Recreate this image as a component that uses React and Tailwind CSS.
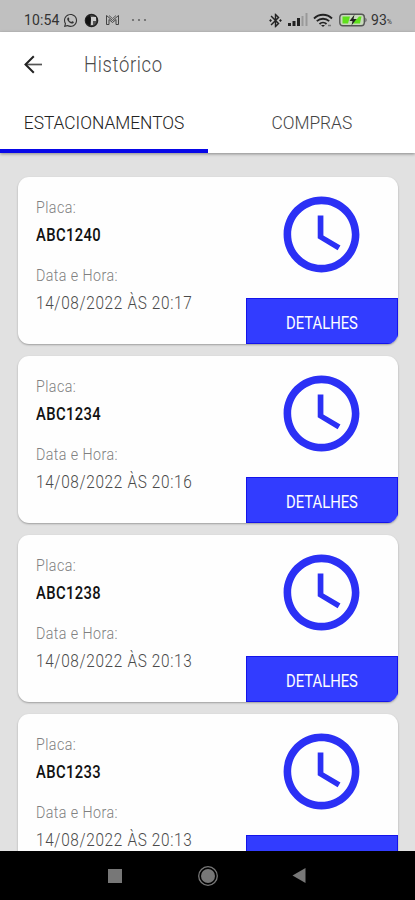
import { FaWhatsapp } from 'react-icons/fa';
import { MdAccessTime, MdBluetoothConnected } from 'react-icons/md';

const tickets = [
  { plate: 'ABC1240', date: '14/08/2022 ÀS 20:17' },
  { plate: 'ABC1234', date: '14/08/2022 ÀS 20:16' },
  { plate: 'ABC1238', date: '14/08/2022 ÀS 20:13' },
  { plate: 'ABC1233', date: '14/08/2022 ÀS 20:13' },
];

const StatusBar = () => (
  <div className="flex h-[32px] shrink-0 items-center bg-[#c0c0c0] pt-[8px] pr-[23px] pl-[24px] text-[#333]">
    <span className="w-[38px] shrink-0 text-[14px] leading-none tracking-[0.1px]">10:54</span>
    <FaWhatsapp className="ml-[1px] size-[15px] shrink-0" />
    <svg className="ml-[6px] size-[15px] shrink-0" viewBox="0 0 15 15">
      <circle cx="7.5" cy="7.5" r="6" fill="#555" stroke="#222" strokeWidth="1.6" />
      <path d="M2 5l4-3 1 4-1 7-4-3z" fill="#111" />
      <path d="M7 4h5v4H9v4H7z" fill="#ccc" />
    </svg>
    <svg className="ml-[6px] h-[12px] w-[15px] shrink-0" viewBox="0 0 15 12" fill="none" stroke="#444">
      <path d="M1.5 10.5v-9l6 5 6-5v9h-2.500v-5l-3.500 3-3.500-3v5z" strokeWidth="1" />
      <path d="M4 1.500l3.500 3 3.500-3" strokeWidth=".8" />
    </svg>
    <svg className="ml-[11px] h-[4px] w-[16px] shrink-0" viewBox="0 0 16 4" fill="#666">
      <circle cx="2" cy="2" r="1.1" />
      <circle cx="8" cy="2" r="1.1" />
      <circle cx="14" cy="2" r="1.1" />
    </svg>

    <div className="ml-auto flex items-center">
      <MdBluetoothConnected className="size-[17px] text-[#222]" />
      <svg className="ml-[4px] h-[14px] w-[20px]" viewBox="0 0 20 14">
        <path d="M0 10h3v3H0zM4.500 8h3v5h-3zM9 5h3v8H9z" fill="#222" />
        <path d="M13.500 3h2v10h-2zM17.500 0h2v13h-2z" fill="#999" />
      </svg>
      <svg className="ml-[5px] h-[15px] w-[20px]" viewBox="0 0 20 15" fill="none" stroke="#222" strokeWidth="1.8">
        <path d="M1 5.500c5-5 13-5 18 0M3.800 8.200c3.500-3.300 8.900-3.300 12.400 0M6.500 11c2-1.900 5-1.900 7 0" />
        <path d="M8 12l2 2 2-2z" fill="#222" stroke="none" />
        <path d="M15 12.500h3" stroke="#777" strokeWidth="1.500" />
      </svg>
      <svg className="ml-[6px] h-[14px] w-[29px]" viewBox="0 0 29 14">
        <rect x=".8" y="1.200" width="24.500" height="11.600" rx="3" fill="#c8d8bc" stroke="#555" strokeWidth="1.400" />
        <path d="M3.500 3.500h7.500l-2 7H3.500zM16 6h2l2-2.500h2.500l-1.500 7h-7z" fill="#5fe01c" />
        <path d="M15.500 1.500l-5 6.500h3l-1 4.500 5-6.500h-3z" fill="#222" />
        <path d="M26.500 4.500q2 2.500 0 5z" fill="#444" />
      </svg>
      <span className="ml-[3px] text-[14px] leading-none">93</span>
      <span className="mt-[4px] text-[7px] leading-none">%</span>
    </div>
  </div>
);

const Header = () => (
  <header className="z-10 flex h-[121px] shrink-0 flex-col bg-white shadow-[0_1px_3px_rgba(0,0,0,0.4)]">
    <div className="flex h-[66px] items-center pl-[24px]">
      <svg className="mb-[2px] h-[19px] w-[18px]" viewBox="0 0 18 19" fill="none">
        <path d="M1.500 9.500H18" stroke="#555" strokeWidth="1.700" />
        <path d="M9.800 1.200L1.500 9.500l8.300 8.300" stroke="#222" strokeWidth="2" />
      </svg>
      <h1 className="ml-[42px] origin-left scale-x-[0.82] text-[22.500px] font-light tracking-[0.8px] text-[#4a4a4a]">
        Histórico
      </h1>
    </div>
    <div className="flex flex-1 text-[17.500px] font-light">
      <button className="flex w-[208px] justify-center border-b-4 border-[#0808e8] pt-[11px] text-[#222]">
        <span className="scale-x-[0.99] leading-[28px]">ESTACIONAMENTOS</span>
      </button>
      <button className="flex flex-1 justify-center pt-[11px] text-[#444]">
        <span className="scale-x-[0.99] leading-[28px]">COMPRAS</span>
      </button>
    </div>
  </header>
);

const TicketCard = ({ plate, date }) => (
  <div className="flex h-[167px] shrink-0 justify-between overflow-hidden rounded-[11px] bg-[#fefefe] shadow-[0_1px_2px_rgba(0,0,0,0.3)]">
    <div className="flex flex-col items-start pt-[18px] pl-[18px] leading-[24px] whitespace-nowrap">
      <span className="origin-left scale-x-[0.84] text-[17px] font-light tracking-[0.5px] text-[#808080]">Placa:</span>
      <span className="mt-[4px] origin-left scale-x-[0.82] text-[18px] font-medium tracking-[0.5px] text-[#111]">
        {plate}
      </span>
      <span className="mt-[16px] origin-left scale-x-[0.84] text-[17px] font-light tracking-[0.5px] text-[#808080]">
        Data e Hora:
      </span>
      <span className="mt-[4px] origin-left scale-x-[0.83] text-[18.500px] font-light tracking-[0.8px] text-[#4a4a4a]">
        {date}
      </span>
    </div>
    <div className="flex w-[152px] shrink-0 flex-col items-center justify-between">
      <MdAccessTime className="mt-[12px] mr-px size-[91px] text-[#2b30f5]" />
      <button className="flex h-[46px] w-full items-center justify-center border border-[#1414ea] bg-[#323cff] pt-[3px] text-white">
        <span className="scale-x-[0.8] text-[18.500px] leading-[20px]">DETALHES</span>
      </button>
    </div>
  </div>
);

const NavBar = () => (
  <div className="flex h-[49px] shrink-0 items-center bg-black pl-[108px]">
    <div className="size-[14px] bg-[#777]" />
    <svg className="ml-[75px] size-[22px]" viewBox="0 0 22 22">
      <circle cx="11" cy="11" r="9.300" fill="none" stroke="#777" strokeWidth="1.300" />
      <circle cx="11" cy="11" r="7" fill="#777" />
    </svg>
    <svg className="ml-[73px] h-[15px] w-[14px]" viewBox="0 0 14 15">
      <path d="M13.500 0v15L.5 7.500z" fill="#777" />
    </svg>
  </div>
);

const App = () => {
  return (
    <div className="flex h-[900px] w-[415px] flex-col overflow-hidden bg-[#e1e1e1] font-['Roboto',sans-serif]">
      <StatusBar />
      <Header />
      <main className="flex min-h-0 flex-1 flex-col gap-[12px] overflow-hidden pt-[24px] pr-[17px] pl-[18px]">
        {tickets.map((ticket) => (
          <TicketCard key={ticket.plate} plate={ticket.plate} date={ticket.date} />
        ))}
      </main>
      <NavBar />
    </div>
  );
};

export default App;
